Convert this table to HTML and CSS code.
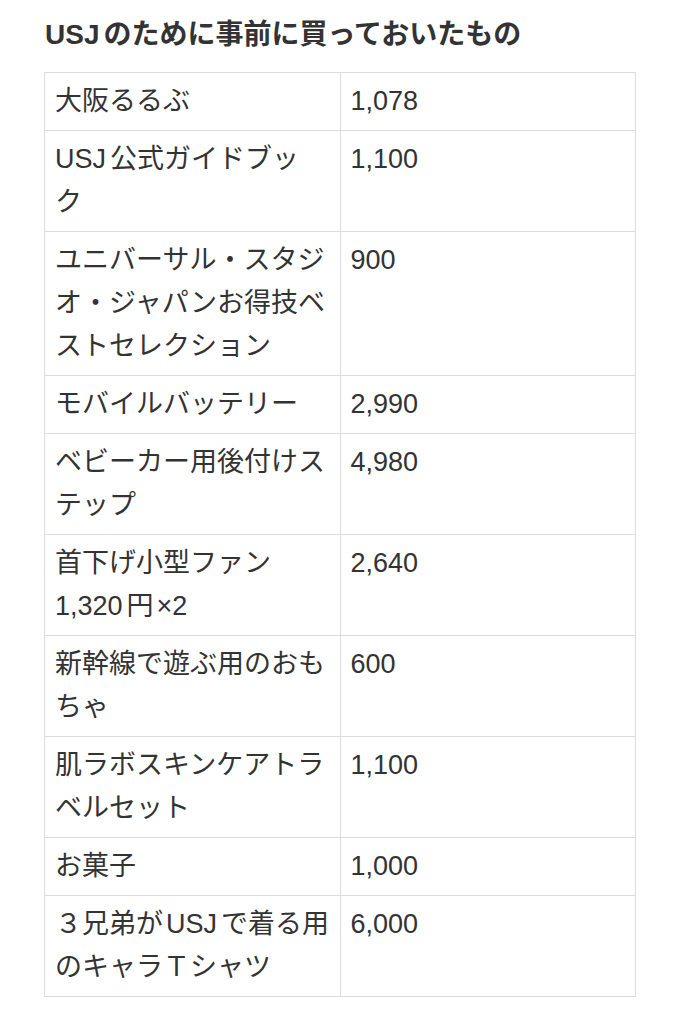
FILE: index.html
```html
<!DOCTYPE html>
<html lang="ja">
<head>
<meta charset="utf-8">
<link rel="stylesheet" href="styles.css">
</head>
<body>
<div class="page">
  <h3 class="title"><span class="lat">USJ</span>のために事前に買っておいたもの</h3>
  <table class="items">
    <tr><td>大阪るるぶ</td><td>1,078</td></tr>
    <tr><td><span class="lat">USJ</span>公式ガイドブッ<br>ク</td><td>1,100</td></tr>
    <tr><td>ユニバーサル・スタジ<br>オ・ジャパンお得技ベ<br>ストセレクション</td><td>900</td></tr>
    <tr><td>モバイルバッテリー</td><td>2,990</td></tr>
    <tr><td>ベビーカー用後付けス<br>テップ</td><td>4,980</td></tr>
    <tr><td>首下げ小型ファン<br>1,320<span class="yen">円</span>×2</td><td>2,640</td></tr>
    <tr><td>新幹線で遊ぶ用のおも<br>ちゃ</td><td>600</td></tr>
    <tr><td>肌ラボスキンケアトラ<br>ベルセット</td><td>1,100</td></tr>
    <tr><td>お菓子</td><td>1,000</td></tr>
    <tr><td>３兄弟が<span class="lat lat-mid">USJ</span>で着る用<br>のキャラＴシャツ</td><td>6,000</td></tr>
  </table>
</div>
</body>
</html>
```
FILE: styles.css
```css
html, body {
  margin: 0;
  padding: 0;
  background: #ffffff;
}
body {
  font-family: "Liberation Sans", "Noto Sans CJK JP", sans-serif;
  color: #333333;
}
.page {
  padding: 18px 44px 0 44px;
}
.title {
  margin: 0 0 20px 1px;
  font-size: 28px;
  line-height: 34px;
  font-weight: bold;
  color: #333333;
}
.lat {
  margin-right: 4px;
}
.lat-mid {
  margin-left: 3px;
}
.yen {
  margin: 0 3px 0 4px;
}
.items {
  width: 592px;
  table-layout: fixed;
  border-collapse: collapse;
}
.items td {
  width: 50%;
  border: 1px solid #dcdcdc;
  padding: 7px 10px 7px 10px;
  font-size: 27px;
  line-height: 43px;
  vertical-align: top;
  white-space: nowrap;
}
```
